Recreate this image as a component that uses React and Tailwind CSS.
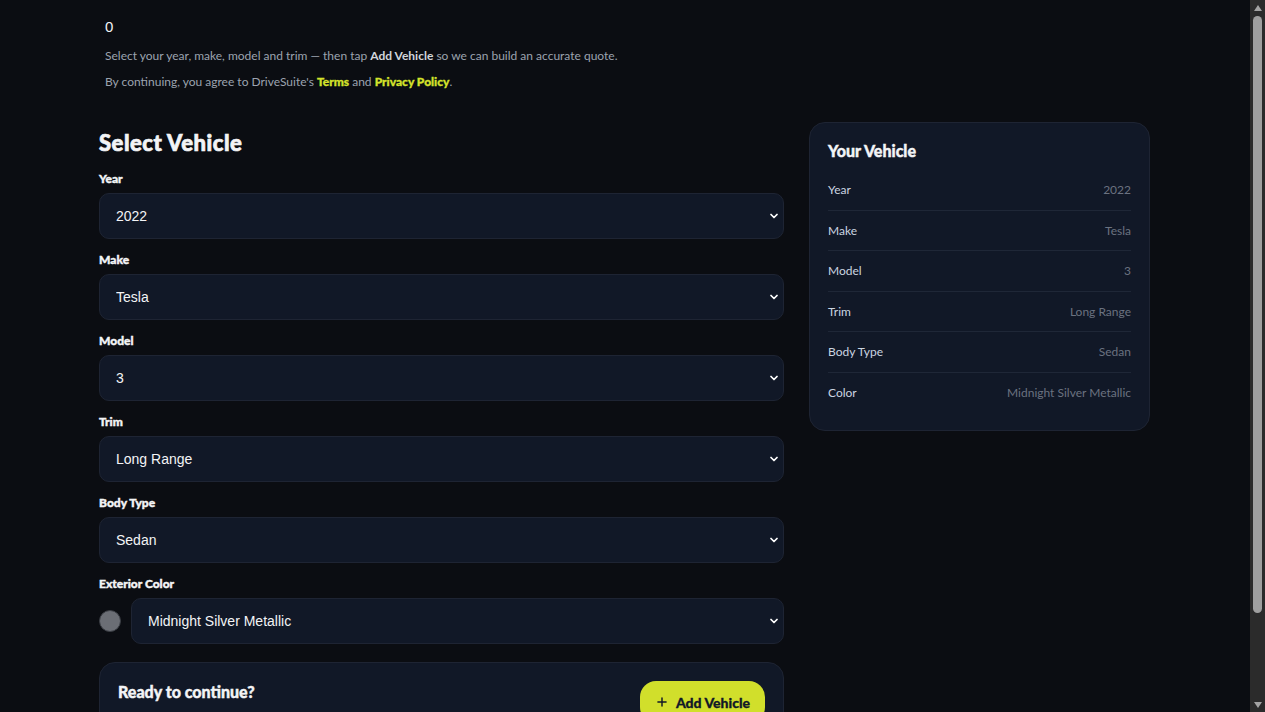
import { ChevronDown, Plus } from "lucide-react";

const fields = [
  { label: "Year", value: "2022" },
  { label: "Make", value: "Tesla" },
  { label: "Model", value: "3" },
  { label: "Trim", value: "Long Range" },
  { label: "Body Type", value: "Sedan" },
];

const summary = [
  ["Year", "2022"],
  ["Make", "Tesla"],
  ["Model", "3"],
  ["Trim", "Long Range"],
  ["Body Type", "Sedan"],
  ["Color", "Midnight Silver Metallic"],
];

const SelectBox = ({ value }) => (
  <div className="relative flex-1">
    <select
      defaultValue={value}
      className="w-full h-[46px] appearance-none rounded-[10px] border border-[#1e2433] bg-[#111827] pl-[16px] pr-10 text-[14px] text-[#f3f4f6] outline-none"
      style={{ fontFamily: '"Liberation Sans", Arial, sans-serif' }}
    >
      <option>{value}</option>
    </select>
    <ChevronDown
      size={12}
      strokeWidth={3.5}
      className="pointer-events-none absolute right-[4px] top-1/2 -translate-y-1/2 text-white"
    />
  </div>
);

// fake window scrollbar, the page is taller than the viewport
const Scrollbar = () => (
  <div className="flex w-[15px] shrink-0 flex-col items-center bg-[#2b2b2b]">
    <div className="flex h-[15px] items-center justify-center">
      <div className="h-0 w-0 border-x-[4px] border-b-[6px] border-x-transparent border-b-[#a3a3a3]" />
    </div>
    <div className="flex flex-1 flex-col items-center">
      <div className="mt-[1px] h-[597px] w-[9px] rounded-[5px] bg-[#9f9f9f]" />
    </div>
    <div className="flex h-[15px] items-center justify-center">
      <div className="h-0 w-0 border-x-[4px] border-t-[6px] border-x-transparent border-t-[#a3a3a3]" />
    </div>
  </div>
);

const App = () => {
  return (
    <div className="flex h-screen overflow-hidden bg-[#0b0d12] text-white">
      <main className="flex-1 overflow-hidden" style={{ fontFamily: "Lato, 'Open Sans', sans-serif" }}>
        <div className="mx-auto max-w-[1052px] pt-[17px] pb-[40px]">
          <div className="pl-[6px]">
            <p className="text-[15px] leading-5 text-[#f3f4f6]" style={{ fontFamily: '"Liberation Sans", Arial, sans-serif' }}>0</p>
            <p className="mt-[11px] text-[12px] leading-4 text-[#9ca3af]">
              Select your year, make, model and trim — then tap{" "}
              <span className="font-bold text-[#d1d5db]">Add Vehicle</span> so we can build an accurate quote.
            </p>
            <p className="mt-[10px] text-[12px] leading-4 text-[#9ca3af]">
              By continuing, you agree to DriveSuite's{" "}
              <span className="font-black text-[#d4e22b] [-webkit-text-stroke:0.3px]">Terms</span> and{" "}
              <span className="font-black text-[#d4e22b] [-webkit-text-stroke:0.3px]">Privacy Policy</span>.
            </p>
          </div>

          <div className="mt-[39px] flex items-start gap-[25px]">
            {/* form column */}
            <div className="w-[685px]">
              <h1 className="text-[22px] leading-7 font-black tracking-[0.5px] text-[#f3f4f6] [-webkit-text-stroke:0.7px]">Select Vehicle</h1>

              <div className="mt-[15px] flex flex-col gap-[14px]">
                {fields.map((f) => (
                  <div key={f.label}>
                    <label className="block text-[12px] leading-[14px] font-black text-[#f3f4f6] mb-[7px] [-webkit-text-stroke:0.4px]">{f.label}</label>
                    <SelectBox value={f.value} />
                  </div>
                ))}

                <div>
                  <label className="block text-[12px] leading-[14px] font-black text-[#f3f4f6] mb-[7px] [-webkit-text-stroke:0.4px]">Exterior Color</label>
                  <div className="flex items-center gap-[10px]">
                    <span className="size-[22px] shrink-0 rounded-full bg-[#6b6e75] border border-[#3a3d44]" />
                    <SelectBox value="Midnight Silver Metallic" />
                  </div>
                </div>
              </div>

              <div className="mt-[18px] rounded-[16px] border border-[#1e2433] bg-[#111827] px-[18px] pt-[19px] pb-[22px]">
                <div className="flex items-start justify-between">
                  <div>
                    <h2 className="text-[16px] leading-5 font-black text-[#f3f4f6] [-webkit-text-stroke:0.4px]">Ready to continue?</h2>
                    <p className="mt-[8px] text-[12px] leading-4 text-[#9ca3af]">
                      Save the current vehicle details to your quote and add another vehicle later.
                    </p>
                  </div>
                  <button className="mt-[-1px] flex h-[42px] items-center gap-[7px] rounded-[16px] bg-[#d1df2b] px-[15px] text-[14px] font-black text-[#111827] [-webkit-text-stroke:0.3px]">
                    <Plus size={14} strokeWidth={2.5} />
                    Add Vehicle
                  </button>
                </div>
              </div>
            </div>

            {/* summary card */}
            <aside className="mt-[-7px] w-[341px] rounded-[16px] border border-[#1e2433] bg-[#111827] px-[18px] pt-[18px] pb-[18px]">
              <h2 className="text-[16px] leading-5 font-black text-[#f3f4f6] [-webkit-text-stroke:0.4px]">Your Vehicle</h2>
              <div className="mt-[9px]">
                {summary.map(([k, v], i) => (
                  <div
                    key={k}
                    className={`flex items-center justify-between py-[12px] text-[12px] leading-[15.5px] ${
                      i < summary.length - 1 ? "border-b border-[#1f2737]" : ""
                    }`}
                  >
                    <span className="text-[#cbd5e1]">{k}</span>
                    <span className="text-[#6b7280]">{v}</span>
                  </div>
                ))}
              </div>
            </aside>
          </div>
        </div>
      </main>
      <Scrollbar />
    </div>
  );
};

export default App;
